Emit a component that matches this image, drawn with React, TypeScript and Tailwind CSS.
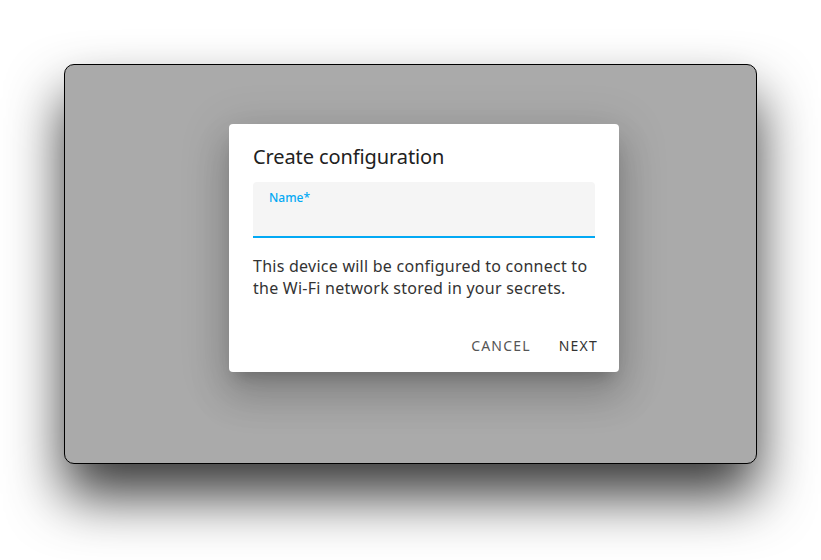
export default function App() {
  return (
    <div
      className="w-[821px] h-[560px] bg-white p-16 overflow-hidden"
      style={{ fontFamily: '"Noto Sans", "Open Sans", sans-serif' }}
    >
      <div className="h-[400px] rounded-[10px] border border-black bg-[#aaaaaa] shadow-[0_32px_55px_rgba(0,0,0,0.78)] pl-[164px] pt-[59px]">
        <div className="w-[390px] h-[248px] rounded bg-white shadow-[0_11px_15px_-7px_rgba(0,0,0,0.2),0_24px_38px_3px_rgba(0,0,0,0.14),0_9px_46px_8px_rgba(0,0,0,0.12)] px-6 flex flex-col">
          <h2 className="pt-[19px] text-[20px] leading-[28px] tracking-[-0.1px] text-[#212121]">Create configuration</h2>
          <div className="mt-[11px] h-[56px] rounded-t bg-[#f5f5f5] border-b-2 border-[#03a9f4] px-4 pt-[9px]">
            <div className="text-[12px] leading-[14px] font-medium text-[#03a9f4]">Name*</div>
          </div>
          <p className="mt-[17px] text-[16px] leading-[22px] tracking-[0.25px] text-[#333333]">
            This device will be configured to connect to the Wi-Fi network stored in your secrets.
          </p>
          <div className="mt-auto mb-[18px] -mr-[3px] flex justify-end gap-[28px]">
            <button className="text-[14px] leading-[16px] tracking-[1.2px] text-[#555555]">CANCEL</button>
            <button className="text-[14px] leading-[16px] tracking-[1.2px] text-[#333333]">NEXT</button>
          </div>
        </div>
      </div>
    </div>
  );
}
